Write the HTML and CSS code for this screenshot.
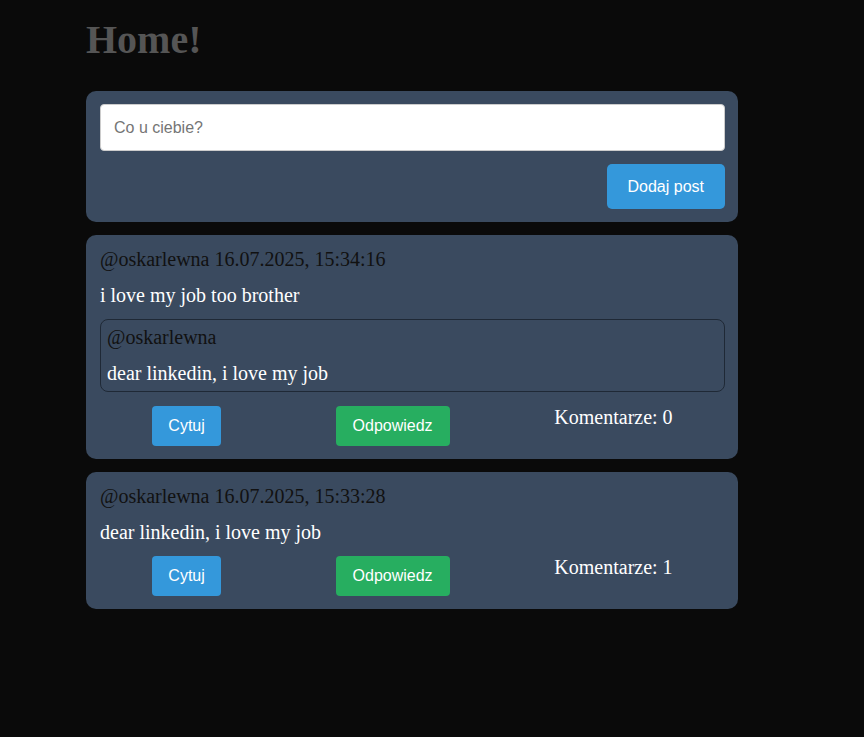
FILE: index.html
```html
<!DOCTYPE html>
<html lang="pl">
<head>
<meta charset="utf-8">
<title>Home</title>
<link rel="stylesheet" href="styles.css">
</head>
<body>
<main class="page">
  <h1 class="title">Home!</h1>
  <section class="card composer">
    <input class="composer-input" type="text" placeholder="Co u ciebie?">
    <div class="composer-actions">
      <button class="btn btn-blue btn-large">Dodaj post</button>
    </div>
  </section>

  <article class="card post">
    <div class="post-meta">@oskarlewna 16.07.2025, 15:34:16</div>
    <div class="post-body">i love my job too brother</div>
    <div class="quote">
      <div class="post-meta">@oskarlewna</div>
      <div class="post-body">dear linkedin, i love my job</div>
    </div>
    <div class="post-actions">
      <button class="btn btn-blue">Cytuj</button>
      <button class="btn btn-green btn-reply">Odpowiedz</button>
      <span class="comments">Komentarze: 0</span>
    </div>
  </article>

  <article class="card post">
    <div class="post-meta">@oskarlewna 16.07.2025, 15:33:28</div>
    <div class="post-body">dear linkedin, i love my job</div>
    <div class="post-actions">
      <button class="btn btn-blue">Cytuj</button>
      <button class="btn btn-green btn-reply">Odpowiedz</button>
      <span class="comments">Komentarze: 1</span>
    </div>
  </article>
</main>
</body>
</html>
```

FILE: styles.css
```css
html, body {
  margin: 0;
  padding: 0;
  background: #0a0a0a;
}

body {
  font-family: "Liberation Serif", "Times New Roman", serif;
  font-size: 20px;
}

.page {
  width: 652px;
  margin-left: 86px;
  padding-top: 17px;
  display: flex;
  flex-direction: column;
  gap: 13px;
}

.title {
  margin: 0 0 15px;
  font-size: 40px;
  font-weight: bold;
  line-height: 46px;
  color: #555555;
}

.card {
  background: #3a4a5f;
  border-radius: 10px;
  padding: 13px 13px 13px 14px;
  display: flex;
  flex-direction: column;
}

.composer {
  gap: 13px;
}

.composer-input {
  box-sizing: border-box;
  width: 100%;
  height: 47px;
  padding: 0 13px;
  border: 1px solid #cccccc;
  border-radius: 4px;
  background: #ffffff;
  font-family: "Liberation Sans", Arial, sans-serif;
  font-size: 16px;
  color: #222;
  outline: none;
}

.composer-input::placeholder {
  color: #757575;
}

.composer-actions {
  display: flex;
  justify-content: flex-end;
}

.btn {
  border: none;
  border-radius: 4px;
  color: #ffffff;
  font-family: "Liberation Sans", Arial, sans-serif;
  font-size: 16px;
  line-height: 18px;
  padding: 11px 16px;
  cursor: pointer;
}

.btn-large {
  line-height: 19px;
  padding: 13px 21px;
  border-radius: 5px;
}

.btn-blue {
  background: #3498db;
}

.btn-green {
  background: #27ae60;
}

.post {
  gap: 12.5px;
}

.post-meta {
  color: #111111;
  line-height: 23px;
}

.post-body {
  color: #ffffff;
  line-height: 23px;
}

.quote {
  border: 1px solid #1f2936;
  border-radius: 8px;
  padding: 6px 6px;
  display: flex;
  flex-direction: column;
  gap: 13px;
}

.post-actions {
  display: flex;
  justify-content: space-around;
  align-items: flex-start;
}

.quote + .post-actions {
  margin-top: 1.5px;
}

.btn-reply {
  margin-left: 10px;
  padding-left: 17px;
  padding-right: 17px;
}

.comments {
  color: #ffffff;
  line-height: 23px;
}
```
